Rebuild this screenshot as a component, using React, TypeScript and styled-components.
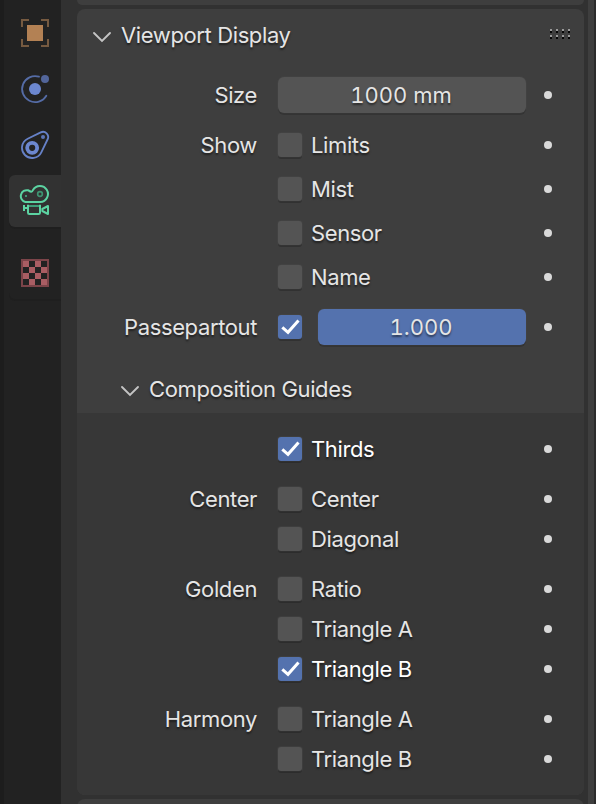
import React from "react";
import styled, { createGlobalStyle, css } from "styled-components";

const GlobalStyle = createGlobalStyle`
  * { box-sizing: border-box; }
  body { margin: 0; background: #313131; overflow: hidden; }
`;

const Editor = styled.div`
  display: flex;
  width: 596px;
  height: 804px;
  overflow: hidden;
  background: #313131;
  font-family: Inter, "Liberation Sans", sans-serif;
  font-size: 22px;
  line-height: 28px;
  letter-spacing: -0.38px;
  color: #e5e5e5;
`;

const TabBar = styled.nav`
  display: flex;
  flex-direction: column;
  gap: 20px;
  flex: none;
  width: 61px;
  padding-left: 5px;
  border-left: 4px solid #1d1d1d;
  background: #222222;
`;

const TabGroup = styled.div<{ $first?: boolean }>`
  display: flex;
  flex-direction: column;
  gap: 4px;
  padding-top: ${(p) => (p.$first ? "7px" : "0")};
  border-radius: 0 0 0 6px;
  box-shadow: 0 2px 0 #1f1f1f;
`;

const Tab = styled.div<{ $active?: boolean }>`
  height: 52px;
  padding: 10px 0 0 9px;
  border-radius: 6px 0 0 6px;
  background: ${(p) => (p.$active ? "#323232" : "transparent")};

  svg { display: block; width: 32px; height: 32px; }
`;

const PanelColumn = styled.main`
  display: flex;
  flex-direction: column;
  gap: 4px;
  flex: none;
  width: 507px;
  margin-left: 16px;
`;

const PanelTail = styled.div`
  flex: none;
  height: 5px;
  border-radius: 0 0 8px 8px;
  background: #3e3e3e;
`;

const PanelHead = styled.div`
  flex: none;
  height: 20px;
  border-radius: 8px 8px 0 0;
  background: #3e3e3e;
`;

const Panel = styled.section`
  flex: none;
  height: 786px;
  border-radius: 8px;
  background: #3e3e3e;
  overflow: hidden;
`;

const textShadow = css`
  text-shadow: 0 2px 2px rgba(0, 0, 0, 0.5);
`;

const Header = styled.header<{ $sub?: boolean }>`
  display: flex;
  align-items: center;
  gap: 9px;
  height: ${(p) => (p.$sub ? "48px" : "52px")};
  padding: 0 13px 0 ${(p) => (p.$sub ? "43px" : "15px")};
  ${textShadow}

  .arrow { flex: none; width: 20px; height: 12px; margin-top: 3px; }
`;

const Grip = styled.svg`
  width: 21px;
  height: 10px;
  margin: -2px 0 0 auto;
`;

const Settings = styled.div`
  display: flex;
  flex-direction: column;
  gap: 10px;
  height: 304px;
  padding-top: 14px;
`;

const SubSettings = styled.div`
  display: flex;
  flex-direction: column;
  gap: 10px;
  height: 382px;
  padding-top: 16px;
  border-radius: 0 0 8px 8px;
  background: #373737;
`;

const Group = styled.div<{ $gap?: number }>`
  display: flex;
  flex-direction: column;
  gap: ${(p) => p.$gap ?? 0}px;
`;

const Row = styled.div`
  display: grid;
  grid-template-columns: 180px 248px 8px;
  align-items: center;
  height: 40px;
`;

const Label = styled.span`
  text-align: right;
  white-space: nowrap;
  ${textShadow}
`;

const Control = styled.div`
  display: flex;
  align-items: center;
  margin-left: 21px;
  width: 248px;
`;

const Box = styled.span<{ $on?: boolean }>`
  display: flex;
  flex: none;
  width: 24px;
  height: 24px;
  margin-right: 9px;
  border-radius: 3px;
  background: ${(p) => (p.$on ? "#5472ae" : "#545454")};
  box-shadow: 0 2px 0 rgba(0, 0, 0, 0.2), 0 0 0 1px rgba(70, 70, 70, 0.5);

  svg { width: 24px; height: 24px; }
`;

const CheckLabel = styled.span<{ $on?: boolean }>`
  white-space: nowrap;
  color: ${(p) => (p.$on ? "#ffffff" : "#e5e5e5")};
  ${textShadow}
`;

const Field = styled.div<{ $slider?: boolean }>`
  flex: 1;
  height: 36px;
  margin-left: ${(p) => (p.$slider ? "7px" : "0")};
  padding-right: 2px;
  border-radius: 6px;
  line-height: 36px;
  letter-spacing: 0;
  text-align: center;
  font-variant-numeric: tabular-nums;
  background: ${(p) => (p.$slider ? "#5472ae" : "#545454")};
  box-shadow: 0 2px 0 rgba(0, 0, 0, 0.16), 0 0 0 1px rgba(70, 70, 70, 0.4);
  ${textShadow}
`;

const Decorator = styled.i`
  width: 8px;
  height: 8px;
  margin-left: 39px;
  border-radius: 50%;
  background: #d9d9d9;
`;

const ScrollBar = styled.div`
  flex: none;
  width: 6px;
  margin-left: 4px;
  background: #3e3e3e;
`;

const WindowEdge = styled.div`
  flex: 1;
  background: #2b2b2b;
`;

const ObjectIcon = () => (
  <svg viewBox="54 51 96 96">
    <rect x="81" y="75" width="48" height="48" fill="#b38154" />
    <path
      d="M66 81V60H87M123 60H144V81M144 117V138H123M87 138H66V117"
      fill="none"
      stroke="#765a40"
      strokeWidth="6"
    />
  </svg>
);

const PhysicsIcon = () => (
  <svg viewBox="54 219 96 96">
    <path d="M117 230A39 39 0 1 0 139 287" fill="none" stroke="#556ca6" strokeWidth="5.5" strokeLinecap="round" />
    <circle cx="105" cy="267" r="18" fill="#6c87cf" />
    <circle cx="135" cy="237" r="12" fill="#52659a" />
  </svg>
);

const ConstraintIcon = () => (
  <svg viewBox="54 57 96 96">
    <path
      d="M83.100 86.100L122.200 67.100A15.500 15.500 0 0 1 142.900 87.800L123.900 126.900A30.500 30.500 0 1 1 83.100 86.100Z"
      fill="none"
      stroke="#6681c7"
      strokeWidth="5.5"
      strokeLinejoin="round"
    />
    <circle cx="96.500" cy="113.500" r="15" fill="none" stroke="#6c87cf" strokeWidth="11.500" />
    <circle cx="129" cy="81" r="6" fill="#5c75b7" />
  </svg>
);

const CameraIcon = () => (
  <svg viewBox="54 225 96 96">
    <g fill="none" stroke="#5cd3a2" strokeWidth="6" strokeLinejoin="round">
      <path d="M76 276A17.500 17.500 0 1 1 85 241Q91 245 94 245Q97 245 99 240A24 24 0 1 1 121 276Z" />
      <path d="M84 284V308Q84 312 88 312H116Q120 312 120 308V284M72 285V303M73 294H84" />
      <path d="M144 288V312L127 303V297Z" />
    </g>
    <path d="M87 288H117" stroke="#3e9c78" strokeWidth="6" />
    <circle cx="120" cy="252" r="7" fill="none" stroke="#3e9371" strokeWidth="5" />
    <rect x="75" y="255" width="6" height="6" fill="#3e9371" />
  </svg>
);

const TextureIcon = () => (
  <svg viewBox="54 111 96 96" shapeRendering="crispEdges">
    <rect x="66" y="120" width="78" height="78" fill="#222222" stroke="#7c4449" strokeWidth="6" />
    <path
      d="M69 123h18v18h-18zM105 123h18v18h-18zM87 141h18v18h-18zM123 141h18v18h-18zM69 159h18v18h-18zM105 159h18v18h-18zM87 177h18v18h-18zM123 177h18v18h-18z"
      fill="#a95d63"
    />
  </svg>
);

const Arrow = () => (
  <svg className="arrow" viewBox="0 0 20 12">
    <path d="M2 2L10 10L18 2" fill="none" stroke="#c4c4c4" strokeWidth="1.900" strokeLinecap="round" />
  </svg>
);

const GripDots = () => (
  <Grip viewBox="0 0 21 10" shapeRendering="crispEdges">
    {[0, 6, 12, 18].map((x) =>
      [0, 6].map((y) => (
        <g key={`${x}-${y}`}>
          <rect x={x} y={y} width="2" height="2" fill="#999999" />
          <rect x={x} y={y + 2} width="2" height="2" fill="#050505" />
        </g>
      ))
    )}
  </Grip>
);

const Checkbox = ({ on }: { on?: boolean }) => (
  <Box $on={on}>
    {on && (
      <svg viewBox="0 0 24 24">
        <path d="M4.300 12.300L10 17.300L20.500 5.500" fill="none" stroke="#ffffff" strokeWidth="3" />
      </svg>
    )}
  </Box>
);

const CheckRow = ({ label, text, on }: { label?: string; text: string; on?: boolean }) => (
  <Row>
    <Label>{label}</Label>
    <Control>
      <Checkbox on={on} />
      <CheckLabel $on={on}>{text}</CheckLabel>
    </Control>
    <Decorator />
  </Row>
);

export default function App() {
  return (
    <>
      <GlobalStyle />
      <Editor>
        <TabBar>
          <TabGroup $first>
            <Tab><ObjectIcon /></Tab>
            <Tab><PhysicsIcon /></Tab>
            <Tab><ConstraintIcon /></Tab>
            <Tab $active><CameraIcon /></Tab>
          </TabGroup>
          <TabGroup>
            <Tab><TextureIcon /></Tab>
          </TabGroup>
        </TabBar>
        <PanelColumn>
          <PanelTail />
          <Panel>
            <Header>
              <Arrow />
              <span>Viewport Display</span>
              <GripDots />
            </Header>
            <Settings>
              <Row>
                <Label>Size</Label>
                <Control><Field>1000 mm</Field></Control>
                <Decorator />
              </Row>
              <Group $gap={4}>
                <CheckRow label="Show" text="Limits" />
                <CheckRow text="Mist" />
                <CheckRow text="Sensor" />
                <CheckRow text="Name" />
              </Group>
              <Row>
                <Label>Passepartout</Label>
                <Control>
                  <Checkbox on />
                  <Field $slider>1.000</Field>
                </Control>
                <Decorator />
              </Row>
            </Settings>
            <Header $sub>
              <Arrow />
              <span>Composition Guides</span>
            </Header>
            <SubSettings>
              <CheckRow text="Thirds" on />
              <Group>
                <CheckRow label="Center" text="Center" />
                <CheckRow text="Diagonal" />
              </Group>
              <Group>
                <CheckRow label="Golden" text="Ratio" />
                <CheckRow text="Triangle A" />
                <CheckRow text="Triangle B" on />
              </Group>
              <Group>
                <CheckRow label="Harmony" text="Triangle A" />
                <CheckRow text="Triangle B" />
              </Group>
            </SubSettings>
          </Panel>
          <PanelHead />
        </PanelColumn>
        <ScrollBar />
        <WindowEdge />
      </Editor>
    </>
  );
}
